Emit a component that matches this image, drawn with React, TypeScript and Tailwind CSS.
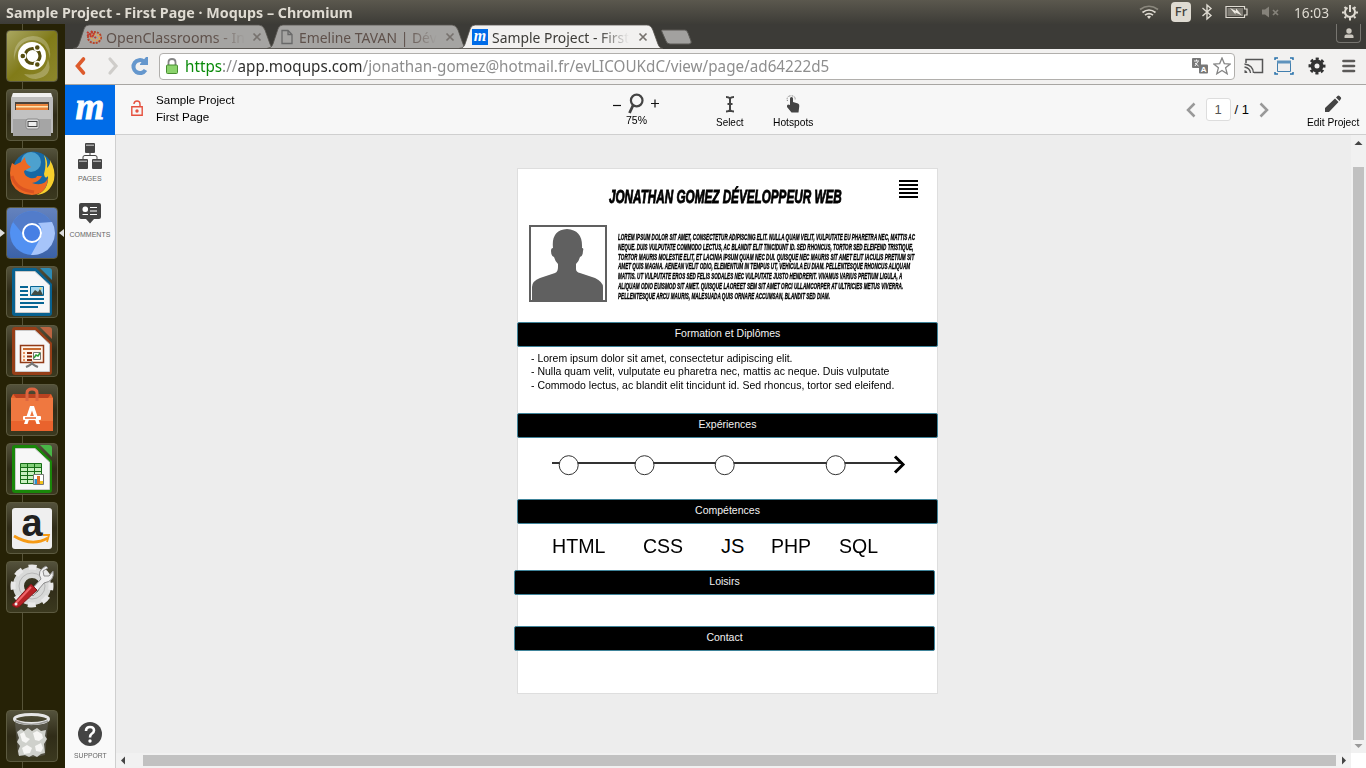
import React, { useLayoutEffect, useRef, useState } from 'react';

const ubuntu = "font-['Noto_Sans',sans-serif]";
const arial = "font-['Liberation_Sans',Arial,sans-serif]";

/* A single line of text that is condensed or stretched to fill its box. */
function Fit({ className = '', children }: { className?: string; children: React.ReactNode }) {
  const box = useRef<HTMLSpanElement>(null);
  const text = useRef<HTMLSpanElement>(null);
  const [scale, setScale] = useState(1);
  useLayoutEffect(() => {
    if (box.current && text.current) setScale(box.current.clientWidth / text.current.offsetWidth);
  }, []);
  return (
    <span ref={box} className={`block shrink-0 whitespace-nowrap ${className}`}>
      <span ref={text} className="inline-block origin-left" style={{ transform: `scaleX(${scale})` }}>
        {children}
      </span>
    </span>
  );
}

function TopBar() {
  return (
    <header className={`flex h-6 shrink-0 items-center justify-between bg-gradient-to-b from-[#5b584e] to-[#3d3c37] pl-1.5 pr-2 text-[#dfdbd2] ${ubuntu}`}>
      <Fit className="w-[347px] text-[14.500px] leading-6 font-bold">Sample Project - First Page · Moqups – Chromium</Fit>
      <div className="flex h-6 items-center">
        <svg className="mr-3 h-6 w-5" viewBox="0 0 20 24" fill="none" stroke="#dfdbd2" strokeWidth="1.700">
          <path d="M1 9.500Q10 3 19 9.500" stroke="#8b887e" />
          <path d="M3.500 12.500Q10 7.500 16.500 12.500" />
          <path d="M6 15.200Q10 12 14 15.200" />
          <path d="M8 16.500Q10 15 12 16.500L10 19Z" fill="#dfdbd2" stroke="none" />
        </svg>
        <span className="flex h-5 w-5 items-center justify-center rounded-sm bg-[#dfdbd2] text-[13px] font-medium text-[#45433d]">Fr</span>
        <svg className="ml-[9px] h-6 w-[14px]" viewBox="0 0 14 24" fill="none" stroke="#dfdbd2" strokeWidth="1.400">
          <path d="M2.500 8L11 15.500L7 19V5L11 8.500L2.500 16" />
        </svg>
        <svg className="ml-[10px] mr-px h-6 w-[25px]" viewBox="0 0 25 24">
          <path d="M2 6.500H20.500V9H23V15H20.500V17.500H2Z" fill="#44423c" stroke="#dfdbd2" strokeWidth="1.200" />
          <path d="M3.500 8H19V16H3.500Z" fill="#7d7a72" />
          <path d="M6 8L12 11V8.500L18 15.500L11.500 12.500V14.500Z" fill="#eeeae2" />
        </svg>
        <svg className="ml-[11px] h-6 w-[19px]" viewBox="0 0 19 24">
          <path d="M1 9.500H4L8 6.500V17.500L4 14.500H1Z" fill="#85827a" />
          <path d="M12 10L17 15M17 10L12 15" stroke="#85827a" strokeWidth="1.700" />
        </svg>
        <Fit className="ml-[14px] w-[35px] text-[14.500px] leading-6">16:03</Fit>
        <svg className="ml-[13px] h-6 w-4" viewBox="0 0 16 24" fill="none" stroke="#dfdbd2">
          <path d="M5.500 7.700A5 5 0 1 0 10.500 7.700" strokeWidth="2" />
          <path d="M8 5V12" strokeWidth="2" />
          <path d="M0 12.500H2.500M13.500 12.500H16M8 17.500V20.500M2.500 7L4 8.500M13.500 7L12 8.500M2.500 18L4 16.500M13.500 18L12 16.500" strokeWidth="2" />
        </svg>
      </div>
    </header>
  );
}

function Tile({ children, lit = '' }: { children: React.ReactNode; lit?: string }) {
  return (
    <div className={`h-[52px] w-[52px] shrink-0 rounded border border-[#5c5a40] ${lit || 'bg-gradient-to-b from-[#54523c] via-[#302c18] to-[#3b391f]'}`}>
      <svg className="-m-px h-[52px] w-[52px] max-w-none overflow-visible" viewBox="0 0 52 52">{children}</svg>
    </div>
  );
}

function OfficeSheet({ dark, light }: { dark: string; light: string }) {
  return (
    <>
      <path d="M6 5Q6 2 9 2H30L46 18V47Q46 50 43 50H9Q6 50 6 47Z" fill={dark} />
      <path d="M9.500 5.500H29L43.500 19V46.500H9.500Z" fill="#f7f7f7" stroke="#c9c9c9" />
      <path d="M34 2H43Q46 2 46 5V14Z" fill={light} />
    </>
  );
}

function Launcher() {
  return (
    <aside className="relative flex w-[65px] shrink-0 flex-col bg-[#262206] pl-1.5 pt-1.5">
      <span className="absolute left-[22px] top-0 h-full w-px bg-[#565338]" />
      <div className="relative flex flex-1 flex-col gap-[7px]">
        <Tile lit="bg-gradient-to-br from-[#aaa75f] via-[#817b18] to-[#8d872c]">
          <path d="M8 31Q6 8 27 6Q46 7 44 29Q41 10 25 10Q10 12 8 31ZM18 44Q39 47 42 29Q48 46 30 49Q22 49 18 44Z" fill="#fff" opacity=".25" />
          <circle cx="26" cy="26" r="14" fill="#fff" />
          <circle cx="26.500" cy="26" r="7.500" fill="none" stroke="#554d10" strokeWidth="3.200" />
          <g fill="#554d10" stroke="#fff" strokeWidth="1.400">
            <circle cx="16.800" cy="26" r="3" /><circle cx="31.300" cy="17.500" r="3" /><circle cx="31.300" cy="34.500" r="3" />
          </g>
        </Tile>
        <Tile>
          <path d="M7 4H45L47 9V44H5V9Z" fill="#bdbdbd" />
          <path d="M7 4H45L46 8H6Z" fill="#efefef" />
          <path d="M9 13H43V22H9Z" fill="#4b423a" />
          <path d="M10 15H42V22H10Z" fill="#e9843c" /><path d="M10 17H42V18.500H10Z" fill="#ffe3ae" />
          <path d="M7 21H45V47H7Z" fill="#a5a5a5" /><path d="M7 21H45V30H7Z" fill="#c2c2c2" />
          <rect x="20" y="30" width="13" height="10" rx="2" fill="#ddd" stroke="#888" />
          <rect x="22" y="32.500" width="9" height="5" fill="#eee" stroke="#444" />
        </Tile>
        <Tile>
          <circle cx="27" cy="24" r="20.500" fill="#1768a4" />
          <circle cx="25" cy="14" r="10" fill="#65b9df" opacity=".7" />
          <path d="M38 7Q42 12 41 20Q45 16 44 12Q50 22 48 32Q44 46 30 47Q43 42 42 28Q39 32 38 26Q41 15 38 7Z" fill="#f7cf2d" />
          <path d="M6 15L9 17L15 14L19 9Q19 16 25 19L18 23Q18 28 24 30Q30 31 31 28L36 28Q33 34 26 35Q38 39 42 30Q41 46 26 47Q12 47 6 36Q2 25 6 15Z" fill="#ed6924" />
          <path d="M6 28Q10 42 28 44" stroke="#c33a20" fill="none" strokeWidth="3" opacity=".45" />
        </Tile>
        <Tile lit="bg-gradient-to-b from-[#6482bd] to-[#3b62a8]">
          <circle cx="26" cy="26" r="22" fill="#5291f2" />
          <path d="M7 15A22 22 0 0 1 45 15L32 18Q21 13 16 26Z" fill="#527cca" />
          <path d="M46 15A22 22 0 0 1 25 48L35 30Q38 22 32 16Z" fill="#a6c4fa" />
          <circle cx="26" cy="26" r="9" fill="#477fe4" stroke="#fff" strokeWidth="2" />
        </Tile>
        <Tile>
          <OfficeSheet dark="#08618f" light="#2e8ab3" />
          <path d="M14 21H22M14 25H22M14 29H22M14 33H38M14 37H38M14 41H32" stroke="#066594" strokeWidth="2" />
          <path d="M24.500 20.500H37.500V29.500H24.500Z" fill="#a5d7ed" stroke="#066594" /><path d="M25 29L29 24L32 26L34 23L37 29Z" fill="#414b42" /><circle cx="34.500" cy="22.500" r="1" fill="#ffd34e" />
        </Tile>
        <Tile>
          <OfficeSheet dark="#963e17" light="#bc6441" />
          <path d="M14.500 20.500H37.500V37.500H14.500Z" fill="#fff4e8" stroke="#923b18" strokeWidth="1.500" />
          <path d="M17 24H35" stroke="#c76a30" strokeWidth="2" /><path d="M17 28H19M17 31.500H19M17 35H19" stroke="#e8925c" strokeWidth="2" />
          <path d="M21 28H26M21 31.500H26M21 35H26" stroke="#8c2f0e" strokeWidth="2" />
          <path d="M27.500 27.500H34.500V34.500H27.500Z" fill="#fff" stroke="#777" /><path d="M28 33L30 30L32 31L34 28" stroke="#2b9e35" strokeWidth="1.500" fill="none" />
          <path d="M20 42Q25 40 26 38Q27 40 32 42" stroke="#777" strokeWidth="2" fill="none" />
        </Tile>
        <Tile>
          <path d="M7 10H45L47 14V47H5V14Z" fill="#e9632d" /><path d="M7 10H45L42 14H10Z" fill="#b94220" />
          <path d="M5 14H47V37H5Z" fill="#ef7840" />
          <path d="M21 17V9Q21 5 26 5Q31 5 31 9V17" fill="none" stroke="#dc6540" strokeWidth="3" />
          <path d="M18 40L24 22H28L34 40H30.500L26 26.500L21.500 40Z" fill="#fff" />
          <rect x="17" y="32" width="18" height="4" rx="1" fill="#fff" /><path d="M19 34H30" stroke="#e9632d" strokeWidth="1.500" />
        </Tile>
        <Tile>
          <OfficeSheet dark="#198709" light="#48b646" />
          <path d="M14.500 20.500H35.500V40.500H14.500Z" fill="#c9efbf" stroke="#166c16" /><path d="M15 21H35V24H15Z" fill="#83cf79" />
          <path d="M14 24.500H36M14 28.500H36M14 32.500H36M14 36.500H36M21.500 20V41M28.500 20V41" stroke="#166c16" />
          <path d="M27.500 31.500H37.500V41.500H27.500Z" fill="#fff" stroke="#777" /><path d="M28.500 36H31V41H28.500Z" fill="#2993d1" /><path d="M31 33H34V41H31Z" fill="#de7029" /><path d="M34 38H37V41H34Z" fill="#f3c41b" />
        </Tile>
        <Tile>
          <rect x="6" y="6" width="40" height="41" rx="3" fill="#efefef" />
          <text x="26" y="33.500" textAnchor="middle" fontFamily="Liberation Sans" fontSize="38" fontWeight="700" fill="#202020">a</text>
          <path d="M8 34Q26 45 42 36" stroke="#f59a14" strokeWidth="2.800" fill="none" /><path d="M37 33H43L41 40" stroke="#f59a14" strokeWidth="1.800" fill="none" />
        </Tile>
        <Tile>
          <circle cx="26" cy="25" r="13.500" fill="none" stroke="#d8d9d8" strokeWidth="11" />
          <circle cx="26" cy="25" r="19" fill="none" stroke="#e8e8e8" strokeWidth="5" strokeDasharray="8 6.920" strokeDashoffset="4" />
          <circle cx="26" cy="25" r="13" fill="none" stroke="#b7b7b7" />
          <path d="M23 31L35 18Q30 10 40 5L42 7L37 10L38 15L43 15L47 10Q49 20 38 22L27 35Z" fill="#eee" stroke="#8d8d8d" />
          <path d="M8 42L25 23L31 29L14 45Q11 48 7 45Q5 43 8 42Z" fill="#b82125" stroke="#811719" /><path d="M10 42L25 26" stroke="#ef656a" strokeWidth="2" /><circle cx="10" cy="43" r="1.500" fill="#eee" />
        </Tile>
        <div className="mt-auto mb-1.5 flex">
          <Tile>
            <path d="M9 13H42L39 45Q26 49 12 45Z" fill="#777" opacity=".4" />
            <path d="M11 22L15 19L18 21L22 18L26 21L31 18L35 21L40 20L39 26L41 29L38 34L39 43L35 44L31 47L27 45L23 47L19 45L13 46L12 41L14 36L11 32L13 28Z" fill="#cfd1cc" />
            <path d="M14 24L18 22L20 27L24 29L20 33L16 31ZM27 23L31 21L36 24L37 28L33 31L29 30ZM16 38L21 35L26 38L24 43L18 44ZM29 36L35 33L37 38L35 42L30 41Z" fill="#f6f6f4" />
            <ellipse cx="25.500" cy="9" rx="17" ry="4.500" fill="none" stroke="#e6e6e6" strokeWidth="3" />
            <path d="M9 11Q25 18 42 11" stroke="#9b9b98" strokeWidth="1.500" fill="none" />
          </Tile>
        </div>
      </div>
      <svg className="absolute left-0 top-[203px] h-3 w-[65px]" viewBox="0 0 65 12" fill="#ddd"><path d="M0 2L5 6L0 10ZM64 2L59 6L64 10Z" /></svg>
    </aside>
  );
}

function CloseX() {
  return <svg className="h-3 w-3 shrink-0" viewBox="0 0 12 12"><path d="M2.500 2.500L9.500 9.500M9.500 2.500L2.500 9.500" stroke="#77726e" strokeWidth="1.700" /></svg>;
}

function TabShape({ fill, d }: { fill: string; d: string }) {
  return <svg className="absolute inset-0 h-[25px] w-full" preserveAspectRatio="none" viewBox="0 0 202 25"><path d={d} fill={fill} stroke="#55534e" strokeWidth=".8" /></svg>;
}

const tabPath = 'M0 24.500Q5 24 6 20L11 5Q12 1 16 1H186Q190 1 192 6L197 20Q198 24 202 24.500Z';
const fade = '[mask-image:linear-gradient(to_right,black_78%,transparent_100%)]';

function Tabs() {
  return (
    <div className={`flex h-[25px] shrink-0 bg-[#3c3b37] pl-2 text-[14.500px] leading-6 ${ubuntu}`}>
      <div className="relative flex w-[202px] items-center">
        <TabShape fill="#a5a4a2" d={tabPath} />
        <div className="relative flex items-center pl-[13px] text-[#5f514b]">
          <svg className="mr-1 h-4 w-4" viewBox="0 0 16 16" fill="none" strokeWidth="2" strokeDasharray="2 1">
            <ellipse cx="8.500" cy="8.500" rx="6.500" ry="5.500" stroke="#b6442b" /><ellipse cx="9.500" cy="8.500" rx="4" ry="3" stroke="#e6a34e" /><path d="M1 3L10 9M1 6L7 8M5 2L9 6" stroke="#c3382d" />
          </svg>
          <Fit className={`w-[139px] ${fade}`}>OpenClassrooms - In</Fit>
          <span className="ml-[6px]"><CloseX /></span>
        </div>
      </div>
      <div className="relative -ml-[8px] flex w-[201px] items-center">
        <TabShape fill="#a5a4a2" d={tabPath} />
        <div className="relative flex items-center pl-[13px] text-[#5f514b]">
          <svg className="mr-[5px] h-4 w-[14px]" viewBox="0 0 14 16" fill="none" stroke="#686868" strokeWidth="1.300"><path d="M2 1.500H8L12 5.500V14.500H2ZM8 1.500V5.500H12" /></svg>
          <Fit className={`w-[138px] ${fade}`}>Emeline TAVAN | Dév</Fit>
          <span className="ml-[7px]"><CloseX /></span>
        </div>
      </div>
      <div className="relative -ml-[9px] flex w-[204px] items-center">
        <TabShape fill="#f2f1f0" d={tabPath} />
        <div className="relative flex items-center pl-[13px] text-[#3c3b37]">
          <span className="mr-1 flex h-4 w-4 items-center justify-center bg-[#006ce8] pb-[2px] font-['Liberation_Serif',serif] text-[16px] leading-none font-bold italic text-white">m</span>
          <Fit className={`w-[137px] ${fade}`}>Sample Project - First</Fit>
          <span className="ml-2"><CloseX /></span>
        </div>
      </div>
      <svg className="-ml-[2px] h-[25px] w-8" viewBox="0 0 32 25"><path d="M1 6H24Q26 6 27 9L30 17Q31 20 28 20H9Q6 20 5 17L1 8Q0 6 1 6Z" fill="#a2a19f" stroke="#5a5955" /></svg>
      <div className="mr-[5px] ml-auto flex h-[19px] w-[25px] items-center justify-center rounded-b border border-t-0 border-[#777570]">
        <svg className="h-3 w-3" viewBox="0 0 12 12" fill="#cbc7bf"><circle cx="6" cy="4" r="2.700" /><path d="M1.500 11V9Q1.500 8 3 7.500H9Q10.500 8 10.500 9V11Z" /></svg>
      </div>
    </div>
  );
}

function AddressBar() {
  return (
    <div className="flex h-9 shrink-0 items-center border-b border-[#a8a6a3] bg-[#f2f1f0] pb-px">
      <svg className="ml-[7px] h-6 w-5" viewBox="0 0 20 24"><path d="M11.500 5L5.500 12L11.500 19" fill="none" stroke="#dd5b2c" strokeWidth="3.600" strokeLinecap="round" /></svg>
      <svg className="ml-3 h-6 w-5" viewBox="0 0 20 24"><path d="M6 5L12 12L6 19" fill="none" stroke="#cfcdca" strokeWidth="3.200" strokeLinecap="round" /></svg>
      <svg className="ml-[6px] h-6 w-5" viewBox="0 0 20 24"><path d="M15.500 16A6.500 6.500 0 1 1 14 7.500" fill="none" stroke="#6597cd" strokeWidth="4" /><path d="M10 11V10L16 3H18V11Z" fill="#6597cd" /></svg>
      <div className={`ml-[9px] flex h-[27px] w-[1076px] items-center rounded border border-[#b1afac] bg-white pl-[6px] ${ubuntu}`}>
        <svg className="mr-[7px] h-[18px] w-3" viewBox="0 0 12 18"><path d="M2.500 9V5Q2.500 2 6 2Q9.500 2 9.500 5V9" fill="none" stroke="#858585" strokeWidth="1.800" /><rect x=".5" y="8" width="11" height="8.500" rx="1" fill="#8bd36c" stroke="#478e31" /></svg>
        <Fit className="w-[644px] text-[16.500px] leading-6 text-[#8e8e8e]">
          <span className="text-[#098a09]">https</span>://<span className="text-[#30302e]">app.moqups.com</span>/jonathan-gomez@hotmail.fr/evLICOUKdC/view/page/ad64222d5
        </Fit>
        <svg className="ml-auto mr-[5px] h-4 w-4" viewBox="0 0 16 16"><rect x="0" y="0" width="9" height="10" rx="1" fill="#777" /><path d="M2 3H7M4.500 1.500V3M3 8L6 3.500M3 5L6.500 8" stroke="#fff" fill="none" strokeWidth=".9" /><rect x="7" y="6.500" width="9" height="9" rx="1" fill="#777" /><text x="8.800" y="14" fontSize="8" fontFamily="Liberation Sans" fontWeight="bold" fill="#fff">A</text></svg>
        <svg className="mr-[3px] h-[18px] w-[18px]" viewBox="0 0 18 18"><path d="M9 1L11.300 6.600L17.200 7L12.600 10.800L14.200 16.800L9 13.500L3.800 16.800L5.400 10.800L.8 7L6.700 6.600Z" fill="#fff" stroke="#858585" strokeWidth="1.300" /></svg>
      </div>
      <svg className="ml-[8px] h-5 w-[22px]" viewBox="0 0 22 20" fill="none" stroke="#555" strokeWidth="1.500"><path d="M3 7V3.500H19.500V16.500H11" /><path d="M1.500 8Q10 9 10.500 17M1.500 11Q7 12 7.500 17" strokeWidth="1.300" /><path d="M1.500 14Q4 14.500 4.500 17H1.500Z" fill="#555" stroke="none" /></svg>
      <svg className="ml-[9px] mr-px h-5 w-5" viewBox="0 0 20 20"><path d="M3.500 5.500H16.500V15.500H3.500Z" fill="#eee" stroke="#427fae" /><path d="M3 4.500H17V7.500H3Z" fill="#5d92bc" /><path d="M1 4V2H4M16 2H19V4M1 16V18H4M16 18H19V16" fill="none" stroke="#2871aa" strokeWidth="1.500" /></svg>
      <svg className="ml-[13px] h-[18px] w-[18px]" viewBox="0 0 18 18"><circle cx="9" cy="9" r="4.500" fill="none" stroke="#333" strokeWidth="4" /><circle cx="9" cy="9" r="7" fill="none" stroke="#333" strokeWidth="3" strokeDasharray="3 2.498" strokeDashoffset="1.500" /></svg>
      <svg className="ml-4 h-4 w-[14px]" viewBox="0 0 14 16"><path d="M1.500 3H12M1.500 8H12M1.500 13H12" stroke="#5c5a58" strokeWidth="2.700" strokeLinecap="round" /></svg>
    </div>
  );
}

function AppHeader() {
  return (
    <div className={`flex h-[50px] shrink-0 border-b border-[#cfcfcf] bg-[#f7f7f7] text-[11px] text-black ${arial}`}>
      <div className="-mb-px flex h-[50px] w-[50px] items-center justify-center bg-[#006ce8] pb-[7px] font-['Liberation_Serif',serif] text-[37px] leading-none font-bold italic text-white [-webkit-text-stroke:.8px_white]">m</div>
      <svg className="mt-[15px] ml-4 h-4 w-3" viewBox="0 0 12 16" fill="none" stroke="#e5503e" strokeWidth="1.400"><path d="M.8 6.700H11.200V15.200H.8ZM3 4V3.500Q3.500 1 6 1Q9 1 9 4V6" /><circle cx="6" cy="11" r="1" fill="#e5503e" /></svg>
      <div className="mt-[7px] ml-[13px] leading-[17px]"><Fit className="w-[79px]">Sample Project</Fit><Fit className="w-[53px]">First Page</Fit></div>
      <div className="mt-2 ml-[378px] w-[46px]">
        <div className="flex h-[21px] items-center justify-between text-[15px]">
          <svg className="h-4 w-2" viewBox="0 0 8 16"><path d="M0 9.500H8" stroke="#111" strokeWidth="1.200" /></svg>
          <svg className="h-[21px] w-4" viewBox="0 0 16 21" fill="none" stroke="#444"><circle cx="8.700" cy="7.500" r="5.800" strokeWidth="2.200" /><path d="M5 12.500L1.500 20" strokeWidth="2.800" /></svg>
          <svg className="h-4 w-2" viewBox="0 0 8 16"><path d="M0 7.500H8M4 3.500V11.500" stroke="#111" strokeWidth="1.200" /></svg>
        </div>
        <Fit className="ml-[13px] w-[21px] leading-3">75%</Fit>
      </div>
      <div className="mt-[10px] ml-[57px] flex w-7 flex-col items-center gap-[3px]">
        <svg className="h-[18px] w-3" viewBox="0 0 12 18" fill="none" stroke="#444" strokeWidth="2"><path d="M2 2Q5 2 6 3.500Q7 2 10 2M6 3V15M2 16.500Q5 16.500 6 15Q7 16.500 10 16.500M3.500 9H8.500" /></svg>
        <Fit className="w-7 leading-3">Select</Fit>
      </div>
      <div className="mt-[10px] ml-[29px] flex w-10 flex-col items-center gap-[3px]">
        <svg className="h-[18px] w-4" viewBox="0 0 16 18" fill="#444"><path d="M5 10V3.500Q5 2 6.500 2Q8 2 8 3.500V7L13 8.500Q14.500 9 14.300 11L13.500 17.500H6.500L2 12Q1.500 10 3 9.500Z" /><path d="M2.500 6Q1 1 6 .8Q11 1 10 5" fill="none" stroke="#666" strokeWidth="1" strokeDasharray="1 1" /></svg>
        <Fit className="w-10 leading-3">Hotspots</Fit>
      </div>
      <div className="ml-auto flex items-center pr-[38px]">
        <svg className="h-4 w-[10px]" viewBox="0 0 10 16"><path d="M8.500 1.500L2 8L8.500 14.500" fill="none" stroke="#999" strokeWidth="2.500" /></svg>
        <span className="ml-[10px] flex h-[23px] w-[25px] items-center justify-center rounded-[3px] border border-[#ddd] bg-white text-[13px] text-[#555]">1</span>
        <span className="ml-1 text-[13px]">/ 1</span>
        <svg className="ml-[10px] h-4 w-[10px]" viewBox="0 0 10 16"><path d="M1.500 1.500L8 8L1.500 14.500" fill="none" stroke="#999" strokeWidth="2.500" /></svg>
      </div>
      <div className="mt-[10px] mr-[7px] flex w-[52px] flex-col items-center gap-[3px]">
        <svg className="h-[18px] w-[18px]" viewBox="0 0 18 18" fill="#444"><path d="M1 17V13L11 3.500L14.500 7L5 17ZM12 2.500L13.500 1Q14.500 0 15.500 1L17 2.500Q17.500 3.500 16.500 4.500L15.500 6Z" /></svg>
        <Fit className="w-[52px] leading-3">Edit Project</Fit>
      </div>
    </div>
  );
}

function Sidebar() {
  return (
    <nav className={`flex w-[51px] shrink-0 flex-col items-center border-r border-[#cfcfcf] bg-[#f9f9f9] pt-2 text-[7px] leading-[9px] text-[#666] ${arial}`}>
      <svg className="h-[26px] w-6" viewBox="0 0 24 26" fill="#444"><rect x="7" y="0" width="10" height="10" rx="1" /><rect x="0" y="16" width="10" height="10" rx="1" /><rect x="14" y="16" width="10" height="10" rx="1" /><path d="M12 10V13M5 16V14Q5 12.500 7 12.500H17Q19 12.500 19 14V16" fill="none" stroke="#444" /><path d="M8 2.200H16M1 18.200H9M15 18.200H23" stroke="#f9f9f9" strokeWidth=".8" /></svg>
      <Fit className="mt-[5px] w-[24px]">PAGES</Fit>
      <svg className="mt-5 h-[21px] w-[22px]" viewBox="0 0 22 21"><path d="M2 0H20Q22 0 22 2V14Q22 16 20 16H15L11 20.500L7 16H2Q0 16 0 14V2Q0 0 2 0Z" fill="#444" /><rect x="3.500" y="3.500" width="5.500" height="5.500" rx="2.500" fill="#fff" /><path d="M11 4.500H18M11 8H18M11 11.500H18M3.500 11.500H9" stroke="#fff" strokeWidth="1.200" /></svg>
      <Fit className="mt-[6px] w-[41px]">COMMENTS</Fit>
      <svg className="mt-auto h-6 w-6" viewBox="0 0 24 24"><circle cx="12" cy="12" r="12" fill="#444" /><path d="M8 9Q8 5 12 5Q16 5 16 8.500Q16 10.500 13.500 12Q12 13 12 15.500" fill="none" stroke="#fff" strokeWidth="2.600" /><circle cx="12" cy="19" r="1.700" fill="#fff" /></svg>
      <Fit className="mt-[5px] mb-2 w-[33px]">SUPPORT</Fit>
    </nav>
  );
}

function SectionBar({ children, className }: { children: React.ReactNode; className: string }) {
  return <h2 className={`flex h-[25px] w-[421px] shrink-0 items-start justify-center rounded-[2px] border border-[#40849a] bg-black pt-[4px] text-[10.500px] leading-[13px] text-[#f2f2f2] ${className}`}>{children}</h2>;
}

const bio: [string, string][] = [
  ['w-[297px]', 'Lorem ipsum dolor sit amet, consectetur adipiscing elit. Nulla quam velit, vulputate eu pharetra nec, mattis ac'],
  ['w-[295px]', 'neque. Duis vulputate commodo lectus, ac blandit elit tincidunt id. Sed rhoncus, tortor sed eleifend tristique,'],
  ['w-[296px]', 'tortor mauris molestie elit, et lacinia ipsum quam nec dui. Quisque nec mauris sit amet elit iaculis pretium sit'],
  ['w-[292px]', 'amet quis magna. Aenean velit odio, elementum in tempus ut, vehicula eu diam. Pellentesque rhoncus aliquam'],
  ['w-[284px]', 'mattis. Ut vulputate eros sed felis sodales nec vulputate justo hendrerit. Vivamus varius pretium ligula, a'],
  ['w-[285px]', 'aliquam odio euismod sit amet. Quisque laoreet sem sit amet orci ullamcorper at ultricies metus viverra.'],
  ['w-[212px]', 'Pellentesque arcu mauris, malesuada quis ornare accumsan, blandit sed diam.'],
];

function Mockup() {
  return (
    <article className={`flex h-[526px] w-[421px] shrink-0 flex-col border border-[#dedede] bg-white text-black ${arial}`}>
      <div className="flex h-[56px] shrink-0 pl-[91px]">
        <h1 className="pt-[16px]"><Fit className="w-[233px] text-[19px] leading-6 font-bold uppercase italic [-webkit-text-stroke:.9px_black]">Jonathan Gomez Développeur Web</Fit></h1>
        <svg className="mt-[10px] ml-[57px] h-5 w-[19px]" viewBox="0 0 19 20"><path d="M0 2H19M0 6H19M0 10H19M0 14H19M0 18H19" stroke="#000" strokeWidth="2" /></svg>
      </div>
      <div className="flex h-[97px] shrink-0 pl-[11px]">
        <svg className="h-[77px] w-[78px]" viewBox="0 0 78 77"><rect x="1" y="1" width="76" height="75" fill="#fff" stroke="#606060" strokeWidth="2" /><path d="M3 75V62Q3 56 11 53L26 48Q29 47 29 42V39Q26 36 25 32Q22 31 22 26Q22 23 24 23Q22 5 38 4Q54 5 53 23Q55 23 54 26Q54 31 51 32Q50 36 47 39V44Q47 47 51 48L66 53Q74 57 74 62V75Z" fill="#606060" /></svg>
        <div className="mt-[8px] ml-[11px] text-[8.500px] leading-[9.800px] font-bold uppercase italic [-webkit-text-stroke:.35px_black]">
          {bio.map(([w, line]) => <Fit key={line} className={w}>{line}</Fit>)}
        </div>
      </div>
      <SectionBar className="-ml-px">Formation et Diplômes</SectionBar>
      <div className="h-[66px] shrink-0 pt-[5px] pl-[12.500px] text-[11px] leading-[13.400px]">
        <Fit className="w-[262px]">- Lorem ipsum dolor sit amet, consectetur adipiscing elit.</Fit>
        <Fit className="w-[358px]">- Nulla quam velit, vulputate eu pharetra nec, mattis ac neque. Duis vulputate</Fit>
        <Fit className="w-[363px]">- Commodo lectus, ac blandit elit tincidunt id. Sed rhoncus, tortor sed eleifend.</Fit>
      </div>
      <SectionBar className="-ml-px">Expériences</SectionBar>
      <svg className="h-[61px] w-[419px] shrink-0" viewBox="518 438 419 61">
        <path d="M552 463H903" stroke="#333" strokeWidth="2" />
        <path d="M895 456.500L903 464.500L895 472.500" fill="none" stroke="#000" strokeWidth="3" />
        <g fill="#fff" stroke="#333"><circle cx="568.700" cy="465.200" r="9.500" /><circle cx="644.500" cy="465.200" r="9.500" /><circle cx="724.700" cy="465.200" r="9.500" /><circle cx="835.700" cy="465.200" r="9.500" /></g>
      </svg>
      <SectionBar className="-ml-px">Compétences</SectionBar>
      <div className="flex h-[46px] shrink-0 pt-[10px] pl-[34px] text-[20px] leading-6">
        <Fit className="w-[53px]">HTML</Fit><Fit className="ml-[38px] w-10">CSS</Fit><Fit className="ml-[38px] w-[23px]">JS</Fit><Fit className="ml-[27px] w-10">PHP</Fit><Fit className="ml-7 w-[39px]">SQL</Fit>
      </div>
      <SectionBar className="-ml-[4px]">Loisirs</SectionBar>
      <SectionBar className="mt-[31px] -ml-[4px]">Contact</SectionBar>
    </article>
  );
}

function Canvas() {
  return (
    <main className="flex min-w-0 flex-1 flex-col bg-white">
      <div className="flex min-h-0 flex-1">
        <div className="flex flex-1 bg-[#ededed] pt-[33px] pl-[401px]"><Mockup /></div>
        <div className="flex w-[15px] flex-col items-center bg-[#f1f1f1]">
          <svg className="h-8 w-[15px]" viewBox="0 0 15 32"><path d="M3.500 10L7.500 6L11.500 10Z" fill="#444" /></svg>
          <div className="h-[573px] w-[11px] bg-[#c1c1c1]" />
          <svg className="h-[13px] w-[15px]" viewBox="0 0 15 13"><path d="M3.500 4L7.500 8L11.500 4Z" fill="#999" /></svg>
        </div>
      </div>
      <div className="mr-[15px] flex h-[15px] shrink-0 items-center bg-[#f1f1f1]">
        <svg className="h-[15px] w-[27px]" viewBox="0 0 27 15"><path d="M9 3.500L5 7.500L9 11.500Z" fill="#444" /></svg>
        <div className="h-[11px] flex-1 bg-[#c1c1c1]" />
        <svg className="h-[15px] w-[15px]" viewBox="0 0 15 15"><path d="M6 3.500L10 7.500L6 11.500Z" fill="#444" /></svg>
      </div>
    </main>
  );
}

export default function App() {
  return (
    <div className="flex h-[768px] w-[1366px] flex-col overflow-hidden">
      <TopBar />
      <div className="flex min-h-0 flex-1">
        <Launcher />
        <div className="flex min-w-0 flex-1 flex-col">
          <Tabs />
          <AddressBar />
          <AppHeader />
          <div className="flex min-h-0 flex-1"><Sidebar /><Canvas /></div>
        </div>
      </div>
    </div>
  );
}
